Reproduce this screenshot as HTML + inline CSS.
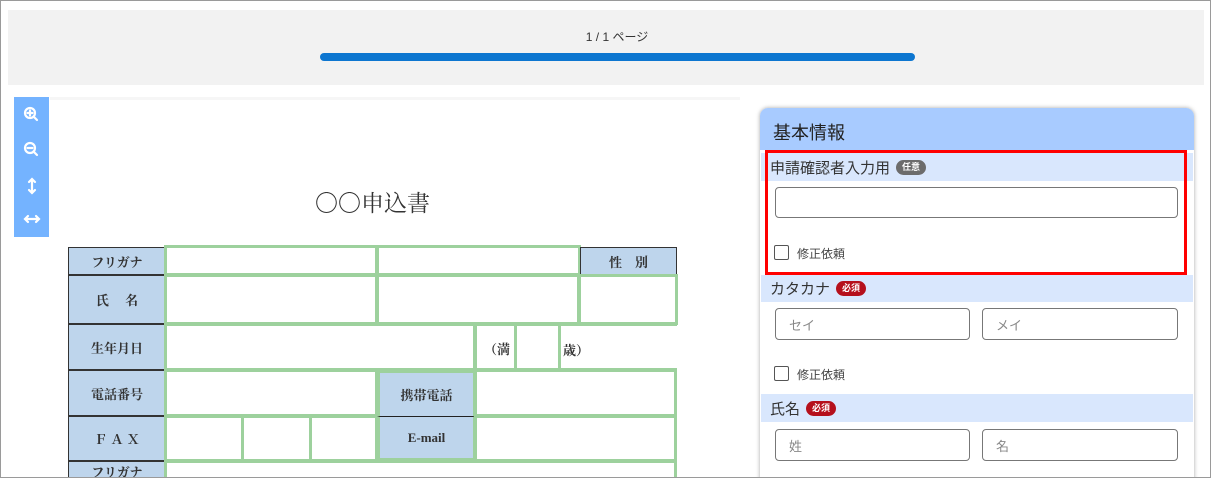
<!DOCTYPE html><html><head><meta charset="utf-8"><style>
*{box-sizing:border-box;margin:0;padding:0}
html,body{width:1211px;height:478px;overflow:hidden}
body{background:#fff;font-family:"Liberation Sans","Noto Sans CJK JP",sans-serif;position:relative}
.a{position:absolute}
.frame{left:0;top:0;width:1211px;height:478px;border:1px solid #9a9a9a}
.g{position:absolute;border:3px solid #9dd19d;background:#fff}
.lb{position:absolute;background:#bed5ec;border:1px solid #333;font-family:"Liberation Serif","Noto Serif CJK SC",serif;font-weight:bold;color:#333;font-size:13px;display:flex;align-items:center;justify-content:center}
.sec{position:absolute;left:761px;width:432px;background:#d9e7fd;color:#333;font-size:15px;padding-left:9px;display:flex;align-items:center}
.badge{display:inline-block;color:#fff;font-size:9px;font-weight:bold;border-radius:9px;padding:1px 6px;margin-left:6px;line-height:13px}
.inp{position:absolute;border:1px solid #777;border-radius:4px;background:#fff;color:#888;font-size:13px;padding-left:13px;display:flex;align-items:center}
.cb{position:absolute;left:774px;width:15px;height:15px;border:1px solid #555;border-radius:2px;background:#fff}
.ct{position:absolute;left:797px;font-size:12px;color:#444}
</style></head><body>
<div class="a" style="left:0;top:0;width:1211px;height:478px;overflow:hidden">
<div class="a" style="left:8px;top:10px;width:1196px;height:75px;background:#f2f2f2"></div>
<div class="a" style="left:560px;top:28px;width:114px;text-align:center;font-size:12px;color:#333">1 / 1 ページ</div>
<div class="a" style="left:320px;top:53px;width:595px;height:8px;border-radius:4px;background:#0d76d0"></div>

<div class="a" style="left:50px;top:97px;width:690px;height:381px;background:#fff;border-top:3px solid #f6f6f6"></div>
<div class="a" style="left:14px;top:97px;width:35px;height:140px;background:#74b3ff"></div>
<svg class="a" style="left:14px;top:97px" width="35" height="140" fill="none" stroke="#fff" stroke-width="2.2" stroke-linecap="round">
<circle cx="16" cy="16" r="5"/><path d="M19.5 19.5L23 23M13.5 16h5M16 13.5v5"/>
<circle cx="16" cy="51" r="5"/><path d="M19.5 54.5L23 58M13.5 51h5"/>
<path d="M18 82v14M15 85l3-3 3 3M15 93l3 3 3-3"/>
<path d="M11 122h14M14 119l-3 3 3 3M22 119l3 3-3 3"/>
</svg>
<div class="a" style="left:290px;top:185px;width:165px;text-align:center;font-size:23px;color:#333;font-family:'Liberation Serif','Noto Serif CJK SC',serif">〇〇申込書</div>

<div class="lb" style="left:68px;top:247px;width:98px;height:28px">フリガナ</div>
<div class="lb" style="left:68px;top:275px;width:98px;height:49px">氏　 名</div>
<div class="lb" style="left:68px;top:324px;width:98px;height:46px">生年月日</div>
<div class="lb" style="left:68px;top:370px;width:98px;height:46px">電話番号</div>
<div class="lb" style="left:68px;top:416px;width:98px;height:45px">Ｆ Ａ Ｘ</div>
<div class="lb" style="left:68px;top:461px;width:98px;height:20px">フリガナ</div>
<div class="a" style="left:676px;top:247px;width:1px;height:231px;background:#333"></div>

<div class="g" style="left:164px;top:245px;width:214px;height:31px"></div>
<div class="g" style="left:376px;top:245px;width:205px;height:31px"></div>
<div class="lb" style="left:580px;top:247px;width:97px;height:28px">性　別</div>
<div class="g" style="left:164px;top:274px;width:214px;height:51px"></div>
<div class="g" style="left:376px;top:274px;width:204px;height:51px"></div>
<div class="g" style="left:578px;top:274px;width:100px;height:51px"></div>
<div class="g" style="left:164px;top:323px;width:312px;height:48px"></div>
<div class="g" style="left:474px;top:323px;width:43px;height:48px;border-right:none"></div>
<div class="g" style="left:514px;top:323px;width:47px;height:48px"></div>
<div class="a" style="left:484px;top:339px;z-index:2;font-family:'Liberation Serif','Noto Serif CJK SC',serif;font-weight:bold;font-size:13px;color:#333;white-space:nowrap">（満</div>
<div class="g" style="left:558px;top:323px;width:119px;height:48px;border-right:none;font-family:'Liberation Serif','Noto Serif CJK SC',serif;font-weight:bold;font-size:13px;color:#333;padding:14px 0 0 2px;white-space:nowrap">歳）</div>
<div class="g" style="left:164px;top:369px;width:214px;height:48px"></div>
<div class="lb" style="left:377px;top:370px;width:98px;height:46px;border-color:#9dd19d;border-width:3px 2px 0 3px">携帯電話</div>
<div class="g" style="left:474px;top:369px;width:203px;height:48px"></div>
<div class="g" style="left:164px;top:415px;width:80px;height:47px"></div>
<div class="g" style="left:241px;top:415px;width:71px;height:47px"></div>
<div class="g" style="left:309px;top:415px;width:69px;height:47px"></div>
<div class="lb" style="left:377px;top:416px;width:98px;height:45px;border-color:#9dd19d;border-width:0 2px 3px 3px;border-top:1px solid #222">E-mail</div>
<div class="g" style="left:474px;top:415px;width:203px;height:47px"></div>
<div class="g" style="left:164px;top:460px;width:513px;height:30px"></div>

<div class="a" style="left:760px;top:108px;width:434px;height:380px;background:#fff;border-radius:8px 8px 0 0;box-shadow:0 0 4px rgba(0,0,0,.35)"></div>
<div class="a" style="left:760px;top:108px;width:434px;height:42px;background:#a8cbff;border-radius:8px 8px 0 0;font-size:18px;color:#222;padding:11px 0 0 13px">基本情報</div>
<div class="sec" style="top:153px;height:28px">申請確認者入力用<span class="badge" style="background:#6c6c6c">任意</span></div>
<div class="inp" style="left:775px;top:187px;width:403px;height:31px"></div>
<div class="cb" style="top:245px"></div><div class="ct" style="top:245px">修正依頼</div>
<div class="a" style="left:765px;top:150px;width:422px;height:125px;border:3px solid #f00"></div>
<div class="sec" style="top:275px;height:27px">カタカナ<span class="badge" style="background:#b5101c">必須</span></div>
<div class="inp" style="left:775px;top:308px;width:195px;height:32px">セイ</div>
<div class="inp" style="left:982px;top:308px;width:196px;height:32px">メイ</div>
<div class="cb" style="top:366px"></div><div class="ct" style="top:366px">修正依頼</div>
<div class="sec" style="top:394px;height:28px">氏名<span class="badge" style="background:#b5101c">必須</span></div>
<div class="inp" style="left:775px;top:429px;width:195px;height:32px">姓</div>
<div class="inp" style="left:982px;top:429px;width:196px;height:32px">名</div>
<div class="a frame"></div>
</div>
</body></html>
